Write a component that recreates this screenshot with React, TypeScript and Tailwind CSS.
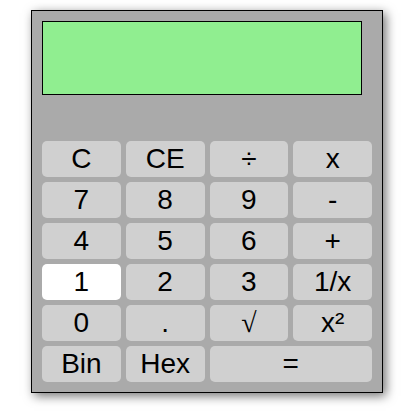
const keys: { label: string; span?: boolean; active?: boolean; serif?: boolean }[] = [
  { label: 'C' },
  { label: 'CE' },
  { label: '÷' },
  { label: 'x' },
  { label: '7' },
  { label: '8' },
  { label: '9' },
  { label: '-' },
  { label: '4' },
  { label: '5' },
  { label: '6' },
  { label: '+' },
  { label: '1', active: true },
  { label: '2' },
  { label: '3' },
  { label: '1/x' },
  { label: '0' },
  { label: '.' },
  { label: '√', serif: true },
  { label: 'x²' },
  { label: 'Bin' },
  { label: 'Hex' },
  { label: '=', span: true },
]

export default function App() {
  return (
    <div className="min-h-[412px] bg-white pl-[31px] pt-[10px] font-['Liberation_Sans',Arial,sans-serif]">
      <div className="w-[352px] h-[383px] border border-black bg-[#aaaaaa] p-[10px] shadow-[3px_3px_10px_rgba(0,0,0,0.55)]">
        <div className="w-[320px] h-[74px] border border-black bg-[#90ee90] mb-[46px]" />
        <div className="grid grid-cols-4 gap-[5px] w-[330px]">
          {keys.map((k) => (
            <button
              key={k.label}
              className={`h-[36px] rounded-[5px] text-[28px] leading-none text-black ${
                k.span ? 'col-span-2' : ''
              } ${k.active ? 'bg-white' : 'bg-[#d0d0d0]'} ${
                k.serif ? "font-['Liberation_Serif',serif]" : ''
              }`}
            >
              {k.label}
            </button>
          ))}
        </div>
      </div>
    </div>
  )
}
